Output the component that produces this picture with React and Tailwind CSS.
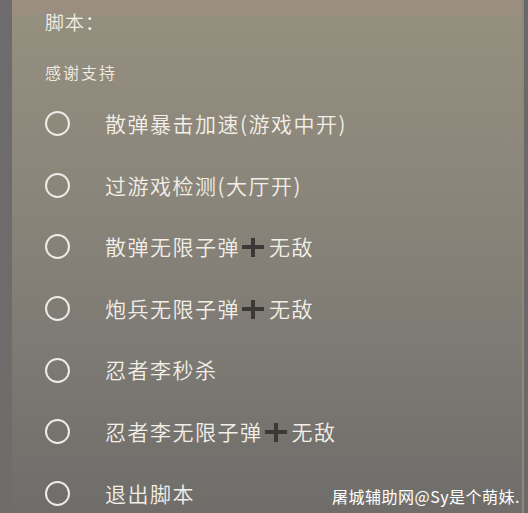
import React from "react";

const items = [
  { label: "散弹暴击加速(游戏中开)" },
  { label: "过游戏检测(大厅开)" },
  { label: ["散弹无限子弹", "无敌"] },
  { label: ["炮兵无限子弹", "无敌"] },
  { label: "忍者李秒杀" },
  { label: ["忍者李无限子弹", "无敌"] },
  { label: "退出脚本" },
];

function Plus() {
  return (
    <svg width="24" height="22" viewBox="0 0 24 22" className="ml-[1px] mr-[4px] blur-[0.6px]">
      <path d="M12 2 V21 M1 11 H23" stroke="#3b3835" strokeWidth="4" strokeLinecap="butt" />
    </svg>
  );
}

function Row({ label }) {
  return (
    <div className="flex h-[61.6px] items-center">
      <div className="h-[25px] w-[25px] rounded-full border-[2.5px] border-[#efebe6]" />
      <div className="ml-[35px] flex items-center text-[21px] font-[350] tracking-[1.5px] text-[#f3efe8]">
        {Array.isArray(label) ? (
          <>
            <span>{label[0]}</span>
            <Plus />
            <span>{label[1]}</span>
          </>
        ) : (
          <span>{label}</span>
        )}
      </div>
    </div>
  );
}

export default function App() {
  return (
    <div
      className="relative flex h-[513px] w-[528px] overflow-hidden"
      style={{ fontFamily: '"Noto Sans CJK SC", "Noto Sans", sans-serif' }}
    >
      <div className="w-[12px] bg-[linear-gradient(to_bottom,#6d6b6b,#6f6d6b)]" />
      <div className="flex-1 bg-[linear-gradient(to_bottom,#9b8e80_0px,#9b8e80_15px,#948f7e_15px,#8a857a_200px,#7d7a74_350px,#6f6d6a_513px)] pl-[33px]">
        <div className="flex h-[44px] items-center pt-[1px] text-[19px] font-[350] tracking-[1px] text-[#f1ede6]">脚本：</div>
        <div className="flex h-[56px] items-center pb-[1px] text-[16px] font-[350] tracking-[2px] text-[#f1ede6]">感谢支持</div>
        <div className="-mt-[7px] flex flex-col">
          {items.map((it, i) => (
            <Row key={i} label={it.label} />
          ))}
        </div>
      </div>
      <div className="w-[2px] bg-[#8c8978]" />
      <div className="w-[4px] bg-[#6a6868]" />
      <div className="absolute left-[332px] top-[488px] text-[16px] tracking-[0.5px] leading-none text-white">
        屠城辅助网@Sy是个萌妹.
      </div>
    </div>
  );
}
